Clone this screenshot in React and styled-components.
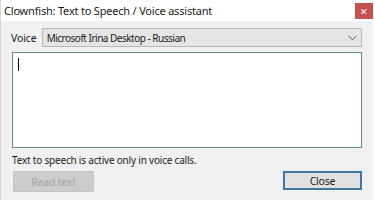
import React from 'react'
import styled, { createGlobalStyle } from 'styled-components'

const Global = createGlobalStyle`
	html, body {
		margin: 0;
		padding: 0;
		background: #f0f0f0;
	}
	body {
		font-family: "Noto Sans", "Liberation Sans", sans-serif;
		font-size: 11px;
		color: #000;
	}
`

const Window = styled.div`
	width: 374px;
	height: 200px;
	box-sizing: border-box;
	display: flex;
	flex-direction: column;
	background: #f0f0f0;
	border-left: 1px solid #d6d6d6;
	overflow: hidden;
`

const TitleBar = styled.div`
	height: 21px;
	flex: none;
	display: flex;
	align-items: center;
	justify-content: space-between;
	background: #ffffff;
	padding-left: 3px;
	padding-right: 1px;
`

const Caption = styled.span`
	font-size: 11px;
	letter-spacing: -0.2px;
	color: #1a1a1a;
`

const CloseBox = styled.div`
	width: 18px;
	height: 16px;
	margin-top: 1px;
	background: #c74f4f;
	color: #fff;
	font-size: 9px;
	display: flex;
	align-items: center;
	justify-content: center;
`

const Body = styled.div`
	flex: 1;
	display: flex;
	flex-direction: column;
	padding: 7px 10px 0 10px;
	border-right: 2px solid #f7f7f7;
`

const VoiceRow = styled.div`
	display: flex;
	align-items: center;
	gap: 5px;
	height: 19px;
`

const Label = styled.span`
	font-size: 10.5px;
	letter-spacing: -0.1px;
	color: #1a1a1a;
`

const Select = styled.div`
	flex: 1;
	height: 17px;
	display: flex;
	align-items: center;
	justify-content: space-between;
	padding: 0 4px;
	background: #e5e5e5;
	border: 1px solid #b8b8b8;
	font-size: 10px;
	letter-spacing: -0.5px;
	color: #1a1a1a;
`

const TextBox = styled.div`
	margin-top: 5px;
	margin-left: 1px;
	height: 96px;
	box-sizing: border-box;
	border: 1px solid #5e8a96;
	background: #fff;
	padding: 5px;
`

const Caret = styled.div`
	width: 1px;
	height: 13px;
	background: #000;
`

const Note = styled.div`
	margin-top: 5px;
	margin-left: 1px;
	font-size: 10px;
	letter-spacing: -0.2px;
	color: #1a1a1a;
`

const Buttons = styled.div`
	margin-top: 4px;
	display: flex;
	justify-content: space-between;
	padding-left: 2px;
`

const Button = styled.div`
	width: ${p => (p.$focused ? '75px' : '79px')};
	height: ${p => (p.$focused ? '15px' : '19px')};
	display: flex;
	align-items: center;
	justify-content: center;
	font-size: 10.5px;
	letter-spacing: -0.2px;
	background: ${p => (p.$disabled ? '#cccccc' : '#e1e1e1')};
	color: ${p => (p.$disabled ? '#a3a3a3' : '#1a1a1a')};
	border: ${p => (p.$focused ? '2px solid #3f77a6' : '1px solid #c4c4c4')};
`

export default function App() {
	return (
		<>
			<Global />
			<Window>
				<TitleBar>
					<Caption>Clownfish: Text to Speech / Voice assistant</Caption>
					<CloseBox>✕</CloseBox>
				</TitleBar>
				<Body>
					<VoiceRow>
						<Label>Voice</Label>
						<Select>
							<span>Microsoft Irina Desktop - Russian</span>
							<svg width="9" height="6" viewBox="0 0 9 6">
								<path d="M0.5 0.8 L4.5 4.8 L8.5 0.8" fill="none" stroke="#555" strokeWidth="1" />
							</svg>
						</Select>
					</VoiceRow>
					<TextBox>
						<Caret />
					</TextBox>
					<Note>Text to speech is active only in voice calls.</Note>
					<Buttons>
						<Button $disabled>Read text</Button>
						<Button $focused>Close</Button>
					</Buttons>
				</Body>
			</Window>
		</>
	)
}
